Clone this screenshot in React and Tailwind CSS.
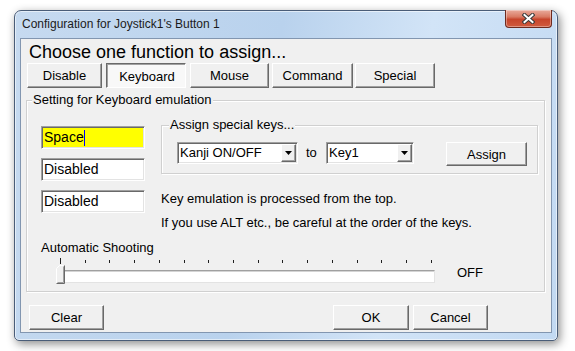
import React from 'react'

const raised =
  'border border-t-white border-l-white border-r-[#696969] border-b-[#696969] shadow-[inset_-1px_-1px_#a0a0a0] bg-[#f0f0f0]'
const sunken =
  'border border-t-[#a0a0a0] border-l-[#a0a0a0] border-r-white border-b-white shadow-[inset_1px_1px_#696969,inset_-1px_-1px_#e3e3e3]'

function Btn({ children, className = '', pressed = false }) {
  return (
    <div
      className={`flex items-center justify-center text-[13px] leading-[15px] text-black ${
        pressed
          ? 'border border-t-[#696969] border-l-[#696969] border-r-white border-b-white shadow-[inset_1px_1px_#a0a0a0] bg-[#f8f8f8] pt-[2px] pl-[2px]'
          : raised
      } ${className}`}
    >
      {children}
    </div>
  )
}

function Field({ children, yellow = false }) {
  return (
    <div
      className={`w-[104px] h-[23px] flex items-center pl-[2px] text-[14px] leading-[17px] text-black ${sunken} ${
        yellow ? 'bg-[#ffff00]' : 'bg-white'
      }`}
    >
      {children}
    </div>
  )
}

function Combo({ value, className = '' }) {
  return (
    <div className={`h-[22px] flex items-center bg-white ${sunken} ${className}`}>
      <span className="flex-1 pl-[2px] text-[13px] leading-[18px] text-black">{value}</span>
      <div className={`w-[15px] h-[18px] mr-px flex items-center justify-center ${raised}`}>
        <svg width="7" height="4" viewBox="0 0 7 4">
          <polygon points="0,0 7,0 3.5,4" fill="#000" />
        </svg>
      </div>
    </div>
  )
}

function Slider() {
  const ticks = Array.from({ length: 16 })
  return (
    <div className="relative w-[379px] h-[25px]">
      {/* ticks */}
      <div className="absolute left-[4px] top-[1px] w-[372px] flex justify-between">
        {ticks.map((_, i) => (
          <span key={i} className={`block w-px bg-[#202020] ${i === 0 ? 'h-[6px] -mt-[2px]' : 'h-[3px]'}`} />
        ))}
      </div>
      {/* track */}
      <div className="absolute left-[2px] top-[11px] w-[377px] h-[13px] bg-white border border-t-[#a0a0a0] border-l-[#a0a0a0] border-r-[#e3e3e3] border-b-[#e3e3e3] shadow-[inset_1px_1px_#d4d4d4]" />
      {/* thumb */}
      <svg className="absolute left-0 top-[6px]" width="9" height="19" viewBox="0 0 9 19">
        <polygon points="0.5,3.5 3.5,0.5 8.5,0.5 8.5,18.5 0.5,18.5" fill="#f0f0f0" />
        <path d="M0.5 18.5V3.5L3.5 0.5H7.5" stroke="#ffffff" fill="none" />
        <path d="M8.5 0.5V18.5H0.5" stroke="#696969" fill="none" />
        <path d="M7.5 1.5V17.5H1.5" stroke="#a0a0a0" fill="none" />
      </svg>
    </div>
  )
}

export default function App() {
  return (
    <div className="w-[575px] h-[351px] bg-white pt-[10px] pl-[14px] overflow-hidden font-['Liberation_Sans',Arial,sans-serif]">
      <div className="w-[544px] h-[331px] flex flex-col px-[5px] pb-[7px] rounded-t-[7px] rounded-b-[5px] border border-[#4a5d78] bg-[linear-gradient(100deg,#c6daf0_0%,#b9d2ed_45%,#d2e4f7_70%,#c2d9f2_100%)] shadow-[inset_0_0_0_1px_rgba(255,255,255,0.55),2px_3px_10px_rgba(0,0,0,0.45)]">
        {/* Title bar */}
        <div className="h-[27px] flex items-start shrink-0">
          <span className="pl-[2px] pt-[6px] text-[12px] leading-[14px] text-[#1b1b1b]">
            Configuration for Joystick1's Button 1
          </span>
          <div className="ml-auto -mt-px w-[47px] h-[18px] rounded-b-[4px] border border-[#6e2a1e] border-t-0 bg-[linear-gradient(#e9ab9c,#d97a63_40%,#c7452c_55%,#d05b3f)] shadow-[inset_0_0_0_1px_rgba(255,255,255,0.35)] flex items-center justify-center">
            <svg width="13" height="11" viewBox="0 0 13 11">
              <path d="M2.5 2L10.5 9M10.5 2L2.5 9" stroke="#3a3a3a" strokeWidth="4" strokeLinecap="square" />
              <path d="M2.5 2L10.5 9M10.5 2L2.5 9" stroke="#ffffff" strokeWidth="2" strokeLinecap="square" />
            </svg>
          </div>
        </div>

        {/* Client area */}
        <div className="flex-1 border border-[#8296b0] bg-[#f0f0f0] flex flex-col">
          <div className="pl-[8px] pt-[3px] text-[18px] leading-[20px] text-black">
            Choose one function to assign...
          </div>

          <div className="flex mt-px ml-[6px] gap-[4px]">
            <Btn className="w-[75px] h-[25px]">Disable</Btn>
            <Btn className="w-[80px] h-[25px]" pressed>
              Keyboard
            </Btn>
            <Btn className="w-[79px] h-[25px]">Mouse</Btn>
            <Btn className="w-[81px] h-[25px] -ml-px">Command</Btn>
            <Btn className="w-[80px] h-[25px] -ml-[2px]">Special</Btn>
          </div>

          {/* Keyboard group */}
          <div className="relative mt-[12px] ml-[5px] w-[519px] h-[192px] border border-[#d0d0d0] shadow-[inset_1px_1px_#ffffff,1px_1px_#ffffff]">
            <span className="absolute left-[5px] -top-[9px] px-px bg-[#f0f0f0] text-[13px] leading-[15px] text-black">
              Setting for Keyboard emulation
            </span>

            <div className="flex items-start mt-[24px]">
              <div className="flex flex-col gap-[9px] ml-[14px] mt-px">
                <Field yellow>
                  Space
                  <span className="inline-block w-px h-[16px] bg-[#0000ff]" />
                </Field>
                <Field>Disabled</Field>
                <Field>Disabled</Field>
              </div>

              <div className="ml-[16px] flex flex-col">
                <div className="relative w-[377px] h-[49px] border border-[#d0d0d0] shadow-[inset_1px_1px_#ffffff,1px_1px_#ffffff]">
                  <span className="absolute left-[7px] -top-[9px] px-px bg-[#f0f0f0] text-[13px] leading-[15px] text-black">
                    Assign special keys...
                  </span>
                  <div className="flex items-start mt-[16px] ml-[15px]">
                    <Combo value="Kanji ON/OFF" className="w-[121px]" />
                    <span className="w-[28px] pl-[8px] text-[13px] leading-[22px] text-black">to</span>
                    <Combo value="Key1" className="w-[88px]" />
                    <Btn className="ml-[32px] w-[81px] h-[24px]">Assign</Btn>
                  </div>
                </div>
                <div className="mt-[13px] text-[13px] leading-[24px] text-black">
                  <p>Key emulation is processed from the top.</p>
                  <p>If you use ALT etc., be careful at the order of the keys.</p>
                </div>
              </div>
            </div>

            <div className="ml-[14px] mt-[5px] text-[13px] leading-[15px] text-black">Automatic Shooting</div>
            <div className="flex items-start mt-[4px] ml-[29px]">
              <Slider />
              <span className="ml-[22px] mt-[6px] text-[13px] leading-[15px] text-black">OFF</span>
            </div>
          </div>

          <div className="flex mt-[13px]">
            <Btn className="ml-[8px] w-[75px] h-[25px]">Clear</Btn>
            <Btn className="ml-[229px] w-[76px] h-[25px]">OK</Btn>
            <Btn className="ml-[4px] w-[75px] h-[25px]">Cancel</Btn>
          </div>
        </div>
      </div>
    </div>
  )
}
